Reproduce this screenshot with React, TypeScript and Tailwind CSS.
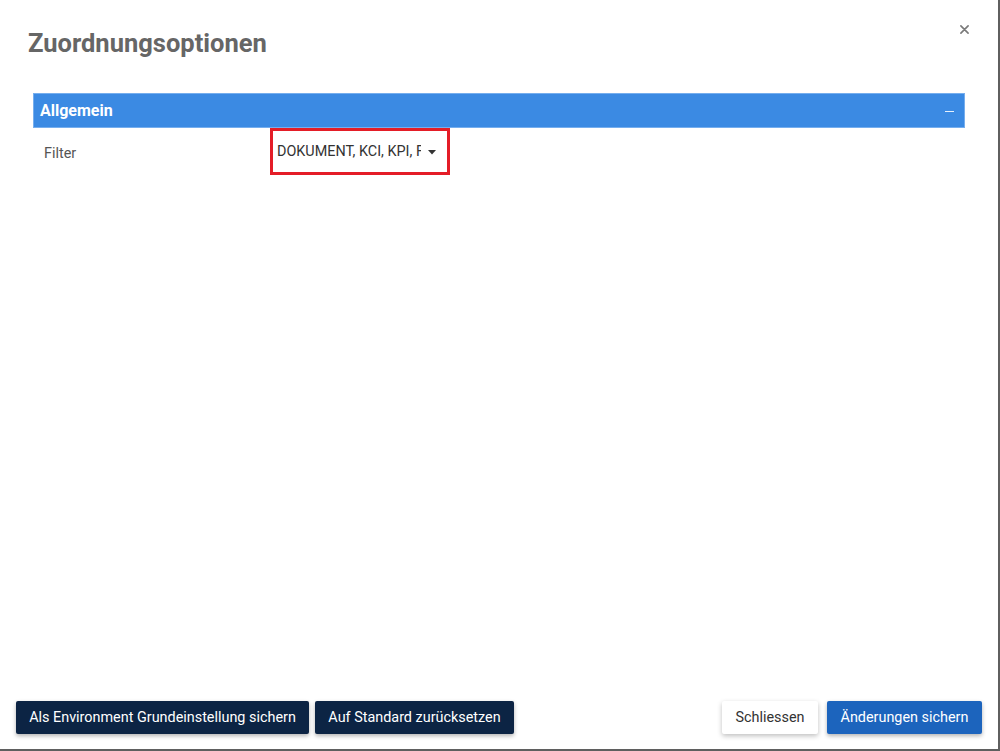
import React from "react";

export default function App() {
  return (
    <div className="w-[1000px] h-[751px] bg-white font-['Roboto','Liberation_Sans',sans-serif] flex flex-col border-r-[2px] border-b-[2px] border-[#5f5f5f] overflow-hidden">
      <div className="relative h-[93px] pl-[28px] pt-[28px] shrink-0">
        <h2 className="text-[25.5px] leading-[31px] font-bold text-[#666666]">Zuordnungsoptionen</h2>
        <button className="absolute right-[27px] top-[19px] w-[14px] h-[20px] flex items-center justify-center text-[#7a7a7a]">
          <svg width="9" height="9" viewBox="0 0 10 10">
            <path d="M1 1 L9 9 M9 1 L1 9" stroke="currentColor" strokeWidth="1.8" strokeLinecap="round" />
          </svg>
        </button>
      </div>
      <div className="flex-1 pl-[33px] pr-[33px]">
        <div className="h-[35px] bg-[#3b8ae3] border border-[#76aeee] flex items-center justify-between pl-[6px] pr-[10px]">
          <span className="text-[16px] font-bold text-white leading-none">Allgemein</span>
          <span className="w-[9px] h-[1px] bg-[#e6f0fc] mt-[1px]"></span>
        </div>
        <div className="flex items-start">
          <div className="w-[237px] pl-[11px] pt-[17px] text-[14.4px] leading-[18px] text-[#555555]">Filter</div>
          <div className="w-[180px] h-[47px] border-[3px] border-[#e41d27] flex items-center pl-[4px]">
            <span className="w-[144px] overflow-hidden whitespace-nowrap text-[14.4px] text-[#333333] leading-[18px]">
              DOKUMENT, KCI, KPI, FRAGE
            </span>
            <svg className="ml-[7px] mt-[1px]" width="8" height="5" viewBox="0 0 8 5">
              <path d="M0 0 L8 0 L4 4.5 Z" fill="#333333" />
            </svg>
          </div>
        </div>
      </div>
      <div className="flex justify-between items-center pl-[16px] pr-[16px] pb-[15px] shrink-0">
        <div className="flex gap-[6px]">
          <button className="w-[293px] h-[33px] rounded-[2px] bg-[#0c2444] text-white text-[14.4px] shadow-[0_2px_4px_rgba(0,0,0,0.3)]">
            Als Environment Grundeinstellung sichern
          </button>
          <button className="w-[199px] h-[33px] rounded-[2px] bg-[#0c2444] text-white text-[14.4px] shadow-[0_2px_4px_rgba(0,0,0,0.3)]">
            Auf Standard zurücksetzen
          </button>
        </div>
        <div className="flex gap-[9px]">
          <button className="w-[96px] h-[33px] rounded-[2px] bg-white text-[#333333] text-[14.4px] shadow-[0_2px_5px_rgba(0,0,0,0.25)]">
            Schliessen
          </button>
          <button className="w-[155px] h-[33px] rounded-[2px] bg-[#1c64bd] text-white text-[14.4px] shadow-[0_2px_4px_rgba(0,0,0,0.3)]">
            Änderungen sichern
          </button>
        </div>
      </div>
    </div>
  );
}
